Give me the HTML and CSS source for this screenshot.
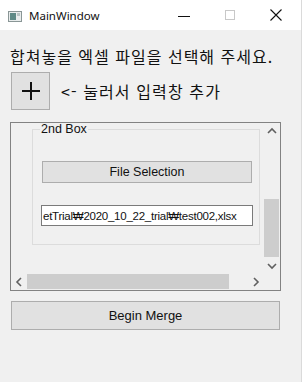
FILE: index.html
```html
<!DOCTYPE html>
<html lang="ko">
<head>
    <meta charset="UTF-8">
    <meta name="viewport" content="width=device-width, initial-scale=1.0">
    <title>MainWindow</title>
    <link rel="stylesheet" href="styles.css">
</head>
<body>
    <div class="window">
        <!-- title bar -->
        <div class="titlebar">
            <svg class="app-icon" width="14" height="11" viewBox="0 0 14 11">
                <rect x="0.5" y="0.5" width="13" height="10" fill="#e8ecec" stroke="#8a9696"/>
                <rect x="2" y="2" width="6" height="7" fill="#5f8a86"/>
                <rect x="9" y="2" width="3" height="3" fill="#b8c4c4"/>
            </svg>
            <span class="caption">MainWindow</span>
            <div class="caption-buttons">
                <svg class="cap-btn" width="14" height="14" viewBox="0 0 14 14">
                    <line x1="1" y1="7.5" x2="13" y2="7.5" stroke="#111" stroke-width="1"/>
                </svg>
                <svg class="cap-btn" width="14" height="14" viewBox="0 0 14 14">
                    <rect x="2.5" y="2.5" width="9" height="9" fill="none" stroke="#c8c8c8"/>
                </svg>
                <svg class="cap-btn" width="14" height="14" viewBox="0 0 14 14">
                    <path d="M1.5 1.5 L12.5 12.5 M12.5 1.5 L1.5 12.5" stroke="#111" stroke-width="1.1"/>
                </svg>
            </div>
        </div>

        <div class="content">
            <p class="guide">합쳐놓을 엑셀 파일을 선택해 주세요.</p>

            <div class="add-row">
                <button class="add-btn">
                    <svg width="20" height="20" viewBox="0 0 20 20">
                        <path d="M10 1 V19 M1 10 H19" stroke="#111" stroke-width="2"/>
                    </svg>
                </button>
                <span class="add-label">&lt;- 눌러서 입력창 추가</span>
            </div>

            <!-- scroll area -->
            <div class="scroll-area">
                <div class="viewport">
                    <fieldset class="group">
                        <legend>2nd Box</legend>
                        <button class="push">File Selection</button>
                        <div class="line-edit"><span>etTrial₩2020_10_22_trial₩test002,xlsx</span></div>
                    </fieldset>
                </div>
                <div class="vbar">
                    <svg class="arrow" width="16" height="16" viewBox="0 0 16 16">
                        <path d="M4 10 L8 6 L12 10" fill="none" stroke="#606060" stroke-width="1.6"/>
                    </svg>
                    <div class="vtrack"><div class="vthumb"></div></div>
                    <svg class="arrow" width="16" height="16" viewBox="0 0 16 16">
                        <path d="M4 6 L8 10 L12 6" fill="none" stroke="#606060" stroke-width="1.6"/>
                    </svg>
                </div>
                <div class="hbar">
                    <svg class="arrow" width="16" height="16" viewBox="0 0 16 16">
                        <path d="M10 4 L6 8 L10 12" fill="none" stroke="#606060" stroke-width="1.6"/>
                    </svg>
                    <div class="htrack"><div class="hthumb"></div></div>
                    <svg class="arrow" width="16" height="16" viewBox="0 0 16 16">
                        <path d="M6 4 L10 8 L6 12" fill="none" stroke="#606060" stroke-width="1.6"/>
                    </svg>
                </div>
                <div class="corner"></div>
            </div>

            <button class="merge-btn">Begin Merge</button>
        </div>
    </div>
</body>
</html>
```

FILE: styles.css
```css
body {
    margin: 0;
    padding: 0;
    background-color: #f0f0f0;
    font-family: 'Liberation Sans', 'Noto Sans CJK KR', sans-serif;
    overflow: hidden;
}

.window {
    width: 301px;
    height: 382px;
    display: flex;
    flex-direction: column;
    border-right: 1px solid #dadada;
}

/* 标题栏 */
.titlebar {
    height: 30px;
    background: #fff;
    display: flex;
    align-items: center;
}

.app-icon {
    margin-left: 8px;
    margin-top: 2px;
}

.caption {
    margin-left: 7px;
    font-family: 'Noto Sans', sans-serif;
    font-size: 11.5px;
    color: #111;
}

.caption-buttons {
    margin-left: auto;
    display: flex;
    gap: 32px;
    margin-right: 18px;
    align-items: center;
}

.cap-btn:first-child {
    margin-top: 1px;
}

.content {
    padding: 14px 0 0 10px;
    display: flex;
    flex-direction: column;
}

.guide {
    margin: 0;
    font-family: 'Noto Sans CJK KR', sans-serif;
    font-size: 16px;
    line-height: 24px;
    letter-spacing: 1px;
    color: #111;
}

.add-row {
    display: flex;
    align-items: center;
    margin-top: 4px;
    margin-left: 1px;
}

.add-btn {
    width: 39px;
    height: 38px;
    padding: 0;
    background: #e1e1e1;
    border: 1px solid #adadad;
    display: flex;
    align-items: center;
    justify-content: center;
}

.add-label {
    margin-left: 11px;
    font-family: 'Noto Sans CJK KR', sans-serif;
    font-size: 16px;
    letter-spacing: 1.1px;
    color: #111;
}

/* 滚动区域 */
.scroll-area {
    margin-top: 12px;
    width: 269px;
    height: 167px;
    border: 1px solid #828282;
    display: grid;
    grid-template-columns: 1fr 16px;
    grid-template-rows: 1fr 16px;
    background: #f0f0f0;
}

.viewport {
    overflow: hidden;
    padding: 0 0 0 21px;
}

.group {
    margin: 0;
    width: 228px;
    height: 122px;
    box-sizing: border-box;
    border: 1px solid #dcdcdc;
    padding: 0 0 0 9px;
    display: flex;
    flex-direction: column;
}

.group legend {
    font-size: 12.5px;
    line-height: 12px;
    padding: 0 1px;
    margin-left: -2px;
    color: #111;
}

.push {
    margin-top: 26px;
    width: 210px;
    height: 22px;
    padding: 0;
    background: #e1e1e1;
    border: 1px solid #adadad;
    font-family: 'Liberation Sans', sans-serif;
    font-size: 12.5px;
    color: #111;
}

.line-edit {
    margin-top: 22px;
    margin-left: -1px;
    width: 212px;
    height: 21px;
    box-sizing: border-box;
    background: #fff;
    border: 1px solid #7a7a7a;
    display: flex;
    align-items: center;
    overflow: hidden;
    white-space: nowrap;
    padding-left: 1px;
    font-size: 11.5px;
    letter-spacing: -0.25px;
    color: #111;
}

.vbar {
    display: flex;
    flex-direction: column;
    background: #f0f0f0;
}

.vtrack {
    flex: 1;
    display: flex;
    flex-direction: column;
    justify-content: flex-end;
    padding-bottom: 1px;
}

.vthumb {
    height: 58px;
    background: #cdcdcd;
    margin-right: 1px;
}

.hbar {
    display: flex;
    background: #f0f0f0;
}

.htrack {
    flex: 1;
    display: flex;
}

.hthumb {
    width: 202px;
    background: #cdcdcd;
    margin-bottom: 1px;
}

.corner {
    background: #f0f0f0;
}

.merge-btn {
    margin-top: 10px;
    margin-left: 1px;
    width: 269px;
    height: 29px;
    padding: 0;
    background: #e1e1e1;
    border: 1px solid #adadad;
    font-family: 'Liberation Sans', sans-serif;
    font-size: 13px;
    color: #111;
}
```
